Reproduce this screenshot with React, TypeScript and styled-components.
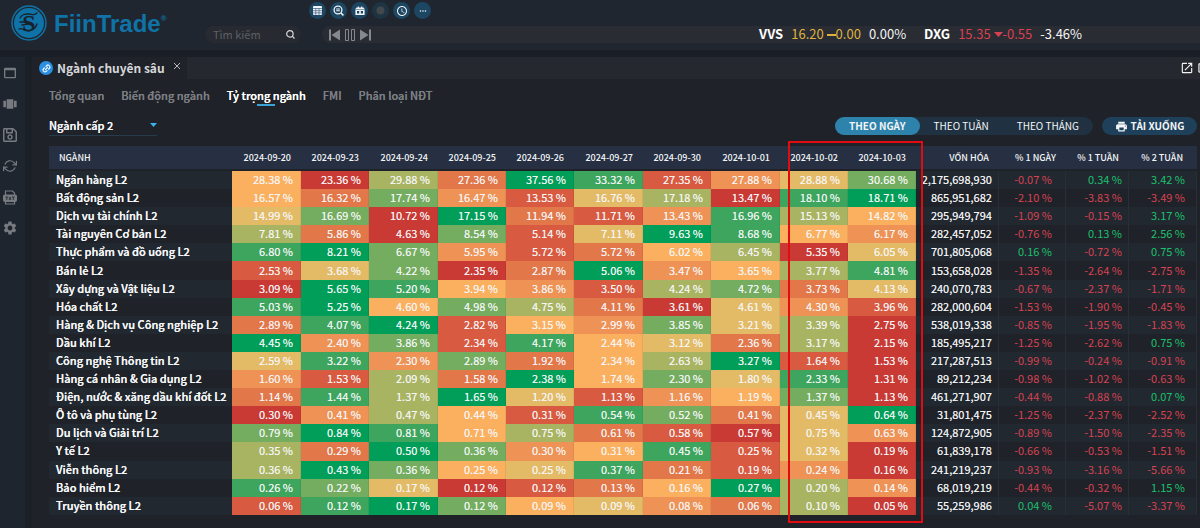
import React from 'react';
import styled, { createGlobalStyle, css } from 'styled-components';
import {
  MdWebAsset, MdViewCarousel, MdSettings, MdOpenInNew, MdPrint,
  MdOutlineCropSquare, MdMoreHoriz, MdAccessTime,
} from 'react-icons/md';
import { FaRegSave } from 'react-icons/fa';
import { FiRefreshCw, FiLink2 } from 'react-icons/fi';

const GlobalStyle = createGlobalStyle`
  * { box-sizing: border-box; }
  body {
    margin: 0;
    background: #1f2228;
    color: #f4f5f6;
    font-family: "Noto Sans CJK SC", "Noto Sans", sans-serif;
    font-size: 11px;
    line-height: 16px;
    overflow: hidden;
  }
  button, input, select { font: inherit; color: inherit; margin: 0; padding: 0; border: 0; background: none; }
  button { cursor: pointer; }
`;

const sturdy = css`
  font-weight: 500;
  text-shadow: 0 0 currentColor;
`;

const Page = styled.div`
  display: flex;
  flex-direction: column;
  min-height: 100vh;
`;

const TopBar = styled.header`
  display: flex;
  height: 50px;
  background: #1f262f;
`;

const Brand = styled.a`
  display: flex;
  flex: none;
  align-items: center;
  width: 205px;
  padding: 0 0 4px 11px;
  gap: 7px;
  color: #0f73a7;
  text-decoration: none;
`;

const BrandName = styled.span`
  padding-top: 2px;
  font: bold 24px/28px "Liberation Sans", Arial, sans-serif;
`;

const Registered = styled.sup`
  font-size: 8px;
  line-height: 8px;
  vertical-align: 11px;
`;

const TopMain = styled.div`
  display: flex;
  flex: 1;
  flex-direction: column;
  min-width: 0;
  gap: 7px;
  padding-top: 2px;
`;

const QuickActions = styled.div`
  display: flex;
  gap: 4px;
  padding-left: 104px;
`;

const RoundButton = styled.button<{ $dim?: boolean }>`
  display: flex;
  align-items: center;
  justify-content: center;
  width: 17px;
  height: 17px;
  border-radius: 50%;
  background: ${p => (p.$dim ? '#1f3443' : '#1d4662')};
  color: ${p => (p.$dim ? '#41484f' : '#f0f4f8')};
`;

const TickerRow = styled.div`
  display: flex;
  gap: 21px;
`;

const SearchBox = styled.label`
  display: flex;
  flex: none;
  align-items: center;
  width: 96px;
  height: 17px;
  padding: 0 6px 0 8px;
  border-radius: 9px;
  background: #282a31;
`;

const SearchInput = styled.input`
  flex: 1;
  min-width: 0;
  height: 17px;
  padding-bottom: 2px;
  outline: none;
  font-size: 11px;
  &::placeholder { color: #5c6066; opacity: 1; }
`;

const Ticker = styled.div`
  display: flex;
  flex: 1;
  align-items: center;
  min-width: 0;
  height: 17px;
  border-radius: 9px 0 0 9px;
  background: #2a2c33;
`;

const Player = styled.div`
  display: flex;
  align-items: center;
  gap: 5px;
  width: 437px;
  padding-left: 7px;
  color: #85888c;
`;

const PlayerButton = styled.button`
  display: flex;
`;

const Quote = styled.div`
  display: flex;
  gap: 8px;
  margin-right: 18px;
  padding-bottom: 2px;
  font-size: 13px;
  line-height: 17px;
`;

const Symbol = styled.strong`
  color: #fff;
`;

const Change = styled.span<{ $down?: boolean }>`
  color: ${p => (p.$down ? '#d8404f' : '#dfb240')};
`;

const Body = styled.div`
  display: flex;
  flex: 1;
  border-top: 7px solid #1a1e26;
`;

const SideBar = styled.nav`
  display: flex;
  flex: none;
  flex-direction: column;
  align-items: center;
  gap: 15px;
  width: 32px;
  padding: 8px 6px 0 0;
  border-right: 7px solid #1b1f27;
  background: #1e252f;
  color: #777b80;
`;

const SideButton = styled.button`
  display: flex;
  align-items: center;
  justify-content: center;
  width: 16px;
  height: 16px;
  flex: none;
`;

const Main = styled.main`
  display: flex;
  flex: 1;
  flex-direction: column;
  min-width: 0;
`;

const WindowBar = styled.div`
  display: flex;
  justify-content: space-between;
  height: 22px;
  background: #26282f;
`;

const WindowTab = styled.div`
  display: flex;
  align-items: center;
  padding: 0 6px 0 7px;
  gap: 4px;
  background: #1f2228;
  color: #d5d7da;
  font-size: 12px;
  font-weight: bold;
  white-space: nowrap;
`;

const LinkBadge = styled.span`
  display: flex;
  align-items: center;
  justify-content: center;
  width: 14px;
  height: 14px;
  border-radius: 50%;
  background: #2b90e2;
  color: #fff;
`;

const CloseButton = styled.button`
  display: flex;
  align-self: flex-start;
  padding: 5px 0 0 4px;
`;

const WindowTools = styled.div`
  display: flex;
  align-items: center;
  gap: 2px;
  margin-right: -10px;
  color: #f2f2f2;
`;

const ToolButton = styled.button`
  display: flex;
`;

const Content = styled.div`
  display: flex;
  flex: 1;
  flex-direction: column;
  padding: 8px 3px 13px 17px;
`;

const TabList = styled.nav`
  display: flex;
  gap: 17px;
`;

const Tab = styled.a<{ $active?: boolean }>`
  ${sturdy}
  position: relative;
  color: ${p => (p.$active ? '#fff' : '#7b7e83')};
  font-size: 11px;
  line-height: 16px;
  text-decoration: none;
  ${p => p.$active && css`
    &::after {
      content: '';
      position: absolute;
      bottom: -3px;
      left: calc(50% - 9px);
      width: 18px;
      height: 2px;
      background: #38a3d4;
    }
  `}
`;

const FilterBar = styled.div`
  display: flex;
  align-items: center;
  justify-content: space-between;
  margin: 13px 0 10px;
`;

const LevelField = styled.div`
  display: flex;
  align-items: center;
  width: 108px;
  height: 20px;
  padding-bottom: 2px;
  border-bottom: 1px solid #263b4b;
`;

const LevelSelect = styled.select`
  ${sturdy}
  flex: 1;
  height: 17px;
  appearance: none;
  outline: none;
`;

const ActionGroup = styled.div`
  display: flex;
  gap: 9px;
`;

const Segmented = styled.div`
  display: flex;
  border-radius: 9px;
  background: #203242;
`;

const SegmentButton = styled.button<{ $active?: boolean }>`
  height: 18px;
  padding: 0 14px;
  border-radius: 9px;
  background: ${p => (p.$active ? '#2d83ab' : 'transparent')};
  font-size: 10px;
  line-height: 18px;
  font-weight: ${p => (p.$active ? 'bold' : 'normal')};
`;

const DownloadButton = styled.button`
  display: flex;
  align-items: center;
  justify-content: center;
  gap: 3px;
  width: 95px;
  height: 18px;
  border-radius: 9px;
  background: #1f405a;
  font-size: 10px;
  font-weight: bold;
`;

const TableFrame = styled.div`
  position: relative;
  display: grid;
  flex: 1;
`;

const Table = styled.table`
  width: 100%;
  height: 100%;
  table-layout: fixed;
  border-collapse: collapse;
  font-size: 11px;
`;

const Column = styled.col<{ $share: number }>`
  width: ${p => (p.$share / 1148) * 100}%;
`;

const HeadCell = styled.th<{ $name?: boolean }>`
  height: 24px;
  padding: ${p => (p.$name ? '0 0 0 10px' : '0 10px 0 0')};
  border-bottom: 2px solid #1f2228;
  background: #263042;
  font-size: 9px;
  font-weight: 500;
  text-align: ${p => (p.$name ? 'left' : 'right')};
  white-space: nowrap;
  &:last-child { padding-right: 14px; }
`;

const Row = styled.tr`
  background: #1f2228;
  &:nth-child(odd) { background: #222830; }
`;

const NameCell = styled.th`
  ${sturdy}
  padding: 0 0 2px 7px;
  line-height: 16px;
  text-align: left;
  white-space: nowrap;
`;

const NumberCell = styled.td`
  padding: 0 7px 2px 0;
  line-height: 16px;
  text-align: right;
  white-space: nowrap;
`;

const HeatCell = styled(NumberCell)<{ $level: number }>`
  padding-right: 8px;
  background: ${p => heat[p.$level]};
  box-shadow: inset -1px 0 rgba(0, 0, 0, 0.06);
  text-shadow: 0 0 rgba(255, 255, 255, 0.6);
`;

const CapCell = styled(NumberCell)`
  box-shadow: inset -1px 0 #2a2e35;
  text-shadow: 0 0 rgba(255, 255, 255, 0.6);
`;

const TrendCell = styled(NumberCell)<{ $up: boolean }>`
  color: ${p => (p.$up ? '#1cc06d' : '#d84252')};
  box-shadow: inset -1px 0 #2a2e35;
  &:nth-child(13) { padding-right: 14px; }
  &:last-child { padding-right: 12px; }
`;

const Highlight = styled.div`
  position: absolute;
  top: -5px;
  bottom: -8px;
  left: ${(739 / 1148) * 100}%;
  width: ${(135 / 1148) * 100}%;
  border: 2px solid #e30b0f;
  pointer-events: none;
`;

const heat = ['#009e58', '#3da55d', '#74ad60', '#a9b462', '#e3bb66', '#fab05f', '#ee9355', '#e2774a', '#d85a40', '#c93a35'];

const dates = ['2024-09-20', '2024-09-23', '2024-09-24', '2024-09-25', '2024-09-26', '2024-09-27', '2024-09-30', '2024-10-01', '2024-10-02', '2024-10-03'];

const columnShares = [183, 69, 68, 69, 68, 68, 69, 68, 69, 68, 68, 83, 67, 63, 68];

type Sector = [name: string, weights: number[], cap: number, trends: number[]];

const sectors: Sector[] = [
  ['Ngân hàng L2', [28.38, 23.36, 29.88, 27.36, 37.56, 33.32, 27.35, 27.88, 28.88, 30.68], 2175698930, [-0.07, 0.34, 3.42]],
  ['Bất động sản L2', [16.57, 16.32, 17.74, 16.47, 13.53, 16.76, 17.18, 13.47, 18.1, 18.71], 865951682, [-2.1, -3.83, -3.49]],
  ['Dịch vụ tài chính L2', [14.99, 16.69, 10.72, 17.15, 11.94, 11.71, 13.43, 16.96, 15.13, 14.82], 295949794, [-1.09, -0.15, 3.17]],
  ['Tài nguyên Cơ bản L2', [7.81, 5.86, 4.63, 8.54, 5.14, 7.11, 9.63, 8.68, 6.77, 6.17], 282457052, [-0.76, 0.13, 2.56]],
  ['Thực phẩm và đồ uống L2', [6.8, 8.21, 6.67, 5.95, 5.72, 5.72, 6.02, 6.45, 5.35, 6.05], 701805068, [0.16, -0.72, 0.75]],
  ['Bán lẻ L2', [2.53, 3.68, 4.22, 2.35, 2.87, 5.06, 3.47, 3.65, 3.77, 4.81], 153658028, [-1.35, -2.64, -2.75]],
  ['Xây dựng và Vật liệu L2', [3.09, 5.65, 5.2, 3.94, 3.86, 3.5, 4.24, 4.72, 3.73, 4.13], 240070783, [-0.67, -2.37, -1.71]],
  ['Hóa chất L2', [5.03, 5.25, 4.6, 4.98, 4.75, 4.11, 3.61, 4.61, 4.3, 3.96], 282000604, [-1.53, -1.9, -0.45]],
  ['Hàng & Dịch vụ Công nghiệp L2', [2.89, 4.07, 4.24, 2.82, 3.15, 2.99, 3.85, 3.21, 3.39, 2.75], 538019338, [-0.85, -1.95, -1.83]],
  ['Dầu khí L2', [4.45, 2.4, 3.86, 2.34, 4.17, 2.44, 3.12, 2.36, 3.17, 2.15], 185495217, [-1.25, -2.62, 0.75]],
  ['Công nghệ Thông tin L2', [2.59, 3.22, 2.3, 2.89, 1.92, 2.34, 2.63, 3.27, 1.64, 1.53], 217287513, [-0.99, -0.24, -0.91]],
  ['Hàng cá nhân & Gia dụng L2', [1.6, 1.53, 2.09, 1.58, 2.38, 1.74, 2.3, 1.8, 2.33, 1.31], 89212234, [-0.98, -1.02, -0.63]],
  ['Điện, nước & xăng dầu khí đốt L2', [1.14, 1.44, 1.37, 1.65, 1.2, 1.131, 1.16, 1.19, 1.37, 1.13], 461271907, [-0.44, -0.88, 0.07]],
  ['Ô tô và phụ tùng L2', [0.3, 0.411, 0.47, 0.44, 0.31, 0.54, 0.52, 0.41, 0.45, 0.64], 31801475, [-1.25, -2.37, -2.52]],
  ['Du lịch và Giải trí L2', [0.79, 0.84, 0.81, 0.71, 0.751, 0.61, 0.58, 0.57, 0.75, 0.63], 124872905, [-0.89, -1.5, -2.35]],
  ['Y tế L2', [0.35, 0.29, 0.5, 0.36, 0.3, 0.31, 0.45, 0.25, 0.32, 0.19], 61839178, [-0.66, -0.53, -1.51]],
  ['Viễn thông L2', [0.36, 0.43, 0.36, 0.25, 0.25, 0.37, 0.21, 0.19, 0.24, 0.16], 241219237, [-0.93, -3.16, -5.66]],
  ['Bảo hiểm L2', [0.26, 0.22, 0.17, 0.12, 0.12, 0.13, 0.16, 0.27, 0.2, 0.14], 68019219, [-0.44, -0.32, 1.15]],
  ['Truyền thông L2', [0.06, 0.121, 0.17, 0.12, 0.09, 0.09, 0.08, 0.06, 0.1, 0.05], 55259986, [0.04, -5.07, -3.37]],
];

// Rank of a day within its row, 0 for the largest weight; on a tie the later day ranks higher.
const rankOf = (values: number[], index: number) =>
  values.filter((v, i) => v > values[index] || (v === values[index] && i > index)).length;

const percent = (value: number) => `${value.toFixed(2)} %`;

const Emblem = () => (
  <svg width="36" height="36" viewBox="0 0 36 36" aria-hidden="true">
    <circle cx="18" cy="18" r="17" fill="none" stroke="#0f73a7" strokeWidth="1.4" />
    <circle cx="18" cy="18" r="15" fill="#0f73a7" />
    <text x="18" y="26" textAnchor="middle" fontFamily="Liberation Serif, serif" fontWeight="bold" fontSize="24" fill="#17222c">S</text>
    <g fill="none" stroke="#17222c" strokeWidth="1.3" strokeLinecap="round">
      <path d="M9 13c2-4 5-4 9-4 3 0 5 2 8-1" />
      <path d="M8 24c3-2 6 3 10 2s7-3 8-7" />
      <path d="M9 17h5M11 20l6-1" />
    </g>
  </svg>
);

const GridIcon = () => (
  <svg width="9" height="9" viewBox="0 0 9 9" aria-hidden="true">
    <rect width="9" height="9" rx="1" fill="#f0f4f8" />
    <path d="M0 2.5h9M0 4.7h9M0 6.9h9M2.8 2v7M6 2v7" stroke="#3b5d79" strokeWidth=".7" />
  </svg>
);

const InspectIcon = () => (
  <svg width="11" height="11" viewBox="0 0 11 11" fill="none" stroke="#f0f4f8" aria-hidden="true">
    <circle cx="5" cy="5" r="3.9" strokeWidth="1.3" />
    <path d="M8 8l2.4 2.4" strokeWidth="1.6" />
    <path d="M3.2 4h3.6M3.2 5.8h3.6" strokeWidth="1.1" />
  </svg>
);

const CalendarIcon = () => (
  <svg width="10" height="10" viewBox="0 0 10 10" aria-hidden="true">
    <path d="M1.5 1.5h1.2V.4h1.2v1.1h2.2V.4h1.2v1.1h1.2L9.6 3v6H.4V3z" fill="#f0f4f8" />
    <path d="M2 5h2.2v2.4H2zM5.8 5H8v2.4H5.8z" fill="#1d4662" />
    <path d="M.4 3.5h9.2" stroke="#1d4662" strokeWidth=".5" />
  </svg>
);

const DimIcon = () => (
  <svg width="9" height="9" viewBox="0 0 9 9" aria-hidden="true">
    <circle cx="4.5" cy="4.5" r="4" fill="currentColor" />
    <path d="M4.5 2v5" stroke="#4d4744" />
  </svg>
);

const PreviousIcon = () => (
  <svg width="11" height="12" viewBox="0 0 11 12" fill="currentColor" aria-hidden="true"><path d="M0 .5h2v11H0zM11 .5v11L2.500 6z" /></svg>
);

const PauseIcon = () => (
  <svg width="10" height="12" viewBox="0 0 10 12" fill="none" stroke="currentColor" aria-hidden="true">
    <path d="M.5 .5h3v11h-3zM6.500 .5h3v11h-3z" />
  </svg>
);

const NextIcon = () => (
  <svg width="11" height="12" viewBox="0 0 11 12" fill="currentColor" aria-hidden="true"><path d="M9 .5h2v11H9zM0 .5v11L8.500 6z" /></svg>
);

const TextFileIcon = () => (
  <svg width="14" height="15" viewBox="0 0 14 15" fill="none" stroke="currentColor" aria-hidden="true">
    <path d="M2.5 5V1h7l2 2v2M2.5 11.5V14h9v-2.5" strokeWidth="1.2" />
    <rect x=".5" y="5" width="13" height="6.5" rx="1" fill="currentColor" />
    <path d="M2.5 7h2.6M3.8 7v3M6 7l2 3M8 7l-2 3M9 7h2.6M10.3 7v3" stroke="#1e252f" strokeWidth=".8" />
  </svg>
);

const Caret = () => (
  <svg width="7" height="4" viewBox="0 0 7 4" aria-hidden="true"><path d="M0 0h7L3.5 4z" fill="#38b4ea" /></svg>
);

const CloseIcon = () => (
  <svg width="8" height="8" viewBox="0 0 8 8" aria-hidden="true"><path d="M1 1l6 6M7 1L1 7" stroke="#b5b7ba" /></svg>
);

const FlatMark = () => (
  <svg width="9" height="5" viewBox="0 0 9 5" aria-hidden="true"><path d="M0 1h9" stroke="currentColor" strokeWidth="2" /></svg>
);

const DownMark = () => (
  <svg width="9" height="7" viewBox="0 0 9 7" aria-hidden="true"><path d="M0 0h9L4.500 5z" fill="currentColor" /></svg>
);

export default function App() {
  return (
    <Page>
      <GlobalStyle />
      <TopBar>
        <Brand href="#">
          <Emblem />
          <BrandName>FiinTrade<Registered>®</Registered></BrandName>
        </Brand>
        <TopMain>
          <QuickActions>
            <RoundButton aria-label="Bảng"><GridIcon /></RoundButton>
            <RoundButton aria-label="Tra cứu"><InspectIcon /></RoundButton>
            <RoundButton aria-label="Lịch"><CalendarIcon /></RoundButton>
            <RoundButton aria-label="Cảnh báo" $dim><DimIcon /></RoundButton>
            <RoundButton aria-label="Thời gian"><MdAccessTime size={12} /></RoundButton>
            <RoundButton aria-label="Thêm"><MdMoreHoriz size={10} /></RoundButton>
          </QuickActions>
          <TickerRow>
            <SearchBox>
              <SearchInput type="text" placeholder="Tìm kiếm" aria-label="Tìm kiếm" />
              <svg width="9" height="9" viewBox="0 0 9 9" fill="none" stroke="#d8dadd" aria-hidden="true">
                <circle cx="3.900" cy="3.900" r="3.200" strokeWidth="1.200" /><path d="M6.200 6.200l2.300 2.300" strokeWidth="1.200" />
              </svg>
            </SearchBox>
            <Ticker>
              <Player>
                <PlayerButton aria-label="Trước"><PreviousIcon /></PlayerButton>
                <PlayerButton aria-label="Tạm dừng"><PauseIcon /></PlayerButton>
                <PlayerButton aria-label="Sau"><NextIcon /></PlayerButton>
              </Player>
              <Quote>
                <Symbol>VVS</Symbol>
                <Change>16.20 <FlatMark />0.00</Change>
                <span>0.00%</span>
              </Quote>
              <Quote>
                <Symbol>DXG</Symbol>
                <Change $down>15.35 <DownMark />-0.55</Change>
                <span>-3.46%</span>
              </Quote>
            </Ticker>
          </TickerRow>
        </TopMain>
      </TopBar>
      <Body>
        <SideBar>
          <SideButton aria-label="Cửa sổ"><MdWebAsset size={18} /></SideButton>
          <SideButton aria-label="Bố cục"><MdViewCarousel size={18} /></SideButton>
          <SideButton aria-label="Lưu"><FaRegSave size={16} /></SideButton>
          <SideButton aria-label="Làm mới"><FiRefreshCw size={14} /></SideButton>
          <SideButton aria-label="Xuất tệp"><TextFileIcon /></SideButton>
          <SideButton aria-label="Cài đặt"><MdSettings size={18} /></SideButton>
        </SideBar>
        <Main>
          <WindowBar>
            <WindowTab>
              <LinkBadge><FiLink2 size={9} strokeWidth={3} transform="rotate(-45)" /></LinkBadge>
              <span>Ngành chuyên sâu</span>
              <CloseButton aria-label="Đóng"><CloseIcon /></CloseButton>
            </WindowTab>
            <WindowTools>
              <ToolButton aria-label="Mở cửa sổ mới"><MdOpenInNew size={14} /></ToolButton>
              <ToolButton aria-label="Phóng to"><MdOutlineCropSquare size={14} /></ToolButton>
            </WindowTools>
          </WindowBar>
          <Content>
            <TabList>
              <Tab href="#">Tổng quan</Tab>
              <Tab href="#">Biến động ngành</Tab>
              <Tab href="#" $active>Tỷ trọng ngành</Tab>
              <Tab href="#">FMI</Tab>
              <Tab href="#">Phân loại NĐT</Tab>
            </TabList>
            <FilterBar>
              <LevelField>
                <LevelSelect aria-label="Cấp ngành" defaultValue="2"><option value="2">Ngành cấp 2</option></LevelSelect>
                <Caret />
              </LevelField>
              <ActionGroup>
                <Segmented>
                  <SegmentButton $active>THEO NGÀY</SegmentButton>
                  <SegmentButton>THEO TUẦN</SegmentButton>
                  <SegmentButton>THEO THÁNG</SegmentButton>
                </Segmented>
                <DownloadButton><MdPrint size={13} />TẢI XUỐNG</DownloadButton>
              </ActionGroup>
            </FilterBar>
            <TableFrame>
              <Table>
                <colgroup>{columnShares.map((share, i) => <Column key={i} $share={share} />)}</colgroup>
                <thead>
                  <tr>
                    <HeadCell $name>NGÀNH</HeadCell>
                    {dates.map(date => <HeadCell key={date}>{date}</HeadCell>)}
                    <HeadCell>VỐN HÓA</HeadCell>
                    <HeadCell>% 1 NGÀY</HeadCell>
                    <HeadCell>% 1 TUẦN</HeadCell>
                    <HeadCell>% 2 TUẦN</HeadCell>
                  </tr>
                </thead>
                <tbody>
                  {sectors.map(([name, weights, cap, trends]) => (
                    <Row key={name}>
                      <NameCell scope="row">{name}</NameCell>
                      {weights.map((value, i) => (
                        <HeatCell key={dates[i]} $level={rankOf(weights, i)}>{percent(value)}</HeatCell>
                      ))}
                      <CapCell>{cap.toLocaleString('en-US')}</CapCell>
                      {trends.map((value, i) => <TrendCell key={i} $up={value > 0}>{percent(value)}</TrendCell>)}
                    </Row>
                  ))}
                </tbody>
              </Table>
              <Highlight />
            </TableFrame>
          </Content>
        </Main>
      </Body>
    </Page>
  );
}
